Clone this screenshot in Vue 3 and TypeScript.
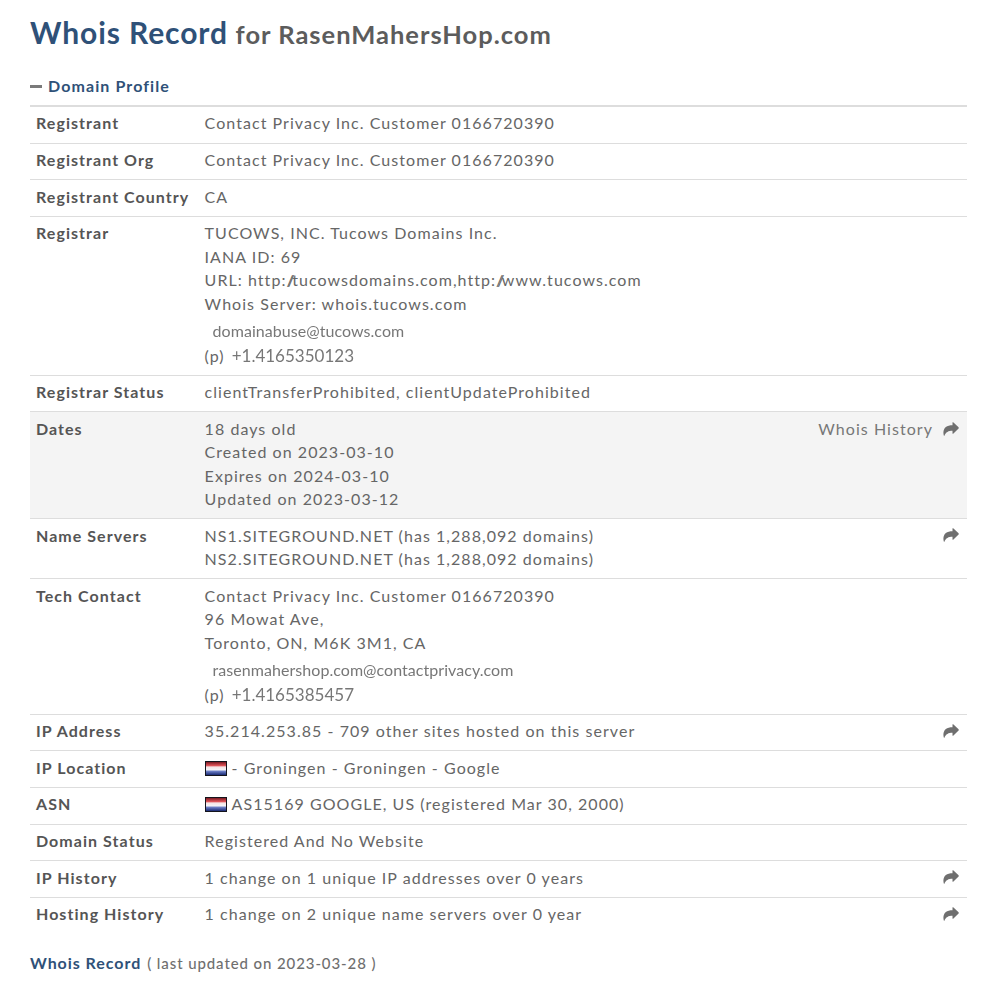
<script setup lang="ts">
interface Row {
  label: string
  lines: string[]
  shade?: boolean
  arrow?: boolean
  link?: string
  email?: string
  phone?: string
  flag?: boolean
}
const rows: Row[] = [
  { label: 'Registrant', lines: ['Contact Privacy Inc. Customer 0166720390'] },
  { label: 'Registrant Org', lines: ['Contact Privacy Inc. Customer 0166720390'] },
  { label: 'Registrant Country', lines: ['CA'] },
  {
    label: 'Registrar',
    lines: ['TUCOWS, INC. Tucows Domains Inc.', 'IANA ID: 69', 'URL: http://tucowsdomains.com,http://www.tucows.com', 'Whois Server: whois.tucows.com'],
    email: 'domainabuse@tucows.com',
    phone: '+1.4165350123'
  },
  { label: 'Registrar Status', lines: ['clientTransferProhibited, clientUpdateProhibited'] },
  {
    label: 'Dates',
    lines: ['18 days old', 'Created on 2023-03-10', 'Expires on 2024-03-10', 'Updated on 2023-03-12'],
    shade: true,
    arrow: true,
    link: 'Whois History'
  },
  { label: 'Name Servers', lines: ['NS1.SITEGROUND.NET (has 1,288,092 domains)', 'NS2.SITEGROUND.NET (has 1,288,092 domains)'], arrow: true },
  {
    label: 'Tech Contact',
    lines: ['Contact Privacy Inc. Customer 0166720390', '96 Mowat Ave,', 'Toronto, ON, M6K 3M1, CA'],
    email: 'rasenmahershop.com@contactprivacy.com',
    phone: '+1.4165385457'
  },
  { label: 'IP Address', lines: ['35.214.253.85 - 709 other sites hosted on this server'], arrow: true },
  { label: 'IP Location', lines: ['- Groningen - Groningen - Google'], flag: true },
  { label: 'ASN', lines: ['AS15169 GOOGLE, US (registered Mar 30, 2000)'], flag: true },
  { label: 'Domain Status', lines: ['Registered And No Website'] },
  { label: 'IP History', lines: ['1 change on 1 unique IP addresses over 0 years'], arrow: true },
  { label: 'Hosting History', lines: ['1 change on 2 unique name servers over 0 year'], arrow: true }
]
const parts = (line: string): string[] => line.split(/(\/\/)/)
</script>

<template>
  <main class="page">
    <h1 class="title"><span class="title-main">Whois Record</span> <span class="title-for">for RasenMahersHop.com</span></h1>
    <h2 class="section"><span class="minus"></span>Domain Profile</h2>
    <div class="table">
      <div v-for="row in rows" :key="row.label" class="row" :class="{ shade: row.shade }">
        <div class="label">{{ row.label }}</div>
        <div class="value">
          <div v-for="line in row.lines" :key="line" class="line">
            <svg v-if="row.flag" class="flag" viewBox="0 0 22 15" aria-hidden="true">
              <defs>
                <linearGradient id="nl" x1="0" y1="0" x2="0" y2="1">
                  <stop offset="0" stop-color="#7a1a22" />
                  <stop offset="0.28" stop-color="#e0555a" />
                  <stop offset="0.38" stop-color="#f6e4e4" />
                  <stop offset="0.6" stop-color="#f4f4f8" />
                  <stop offset="0.72" stop-color="#6a7cc4" />
                  <stop offset="1" stop-color="#1a2a72" />
                </linearGradient>
              </defs>
              <rect width="22" height="15" fill="#14141c" />
              <rect x="1" y="1" width="20" height="13" fill="url(#nl)" />
            </svg><span v-for="(part, i) in parts(line)" :key="i" :class="{ slashes: part === '//' }">{{ part }}</span>
          </div>
          <div v-if="row.email" class="email">{{ row.email }}</div>
          <div v-if="row.phone" class="phone-line"><span class="p">(p)</span><span class="phone">{{ row.phone }}</span></div>
        </div>
        <div v-if="row.arrow" class="side">
          <span v-if="row.link" class="link">{{ row.link }}</span>
          <svg class="arrow" viewBox="0 0 16 14" aria-hidden="true">
            <path d="M15.600 5.200 10.200.300c-.300-.300-.700-.100-.700.300v2.600C4 3.200.400 5.500.400 10.800c0 1 .200 2 .500 3 .100.200.400.200.500 0C2.800 10 5.400 8.700 9.500 8.700v2.700c0 .400.400.600.700.300l5.400-5.100c.300-.300.300-.700 0-1z" />
          </svg>
        </div>
      </div>
    </div>
    <p class="foot"><strong>Whois Record</strong> <span>( last updated on 2023-03-28 )</span></p>
  </main>
</template>

<style>
html, body { margin: 0; background: #fff; }
</style>

<style scoped>
.page {
  box-sizing: border-box;
  width: 991px;
  height: 981px;
  overflow: hidden;
  padding: 0 24px 0 30px;
  font-family: Lato, "Liberation Sans", sans-serif;
  color: #555;
}
.title {
  margin: 0;
  padding-top: 13px;
  height: 56px;
  box-sizing: border-box;
  line-height: 38px;
  font-weight: 700;
  letter-spacing: 0.9px;
}
.title-main { font-size: 30px; color: #2f5178; }
.title-for { font-size: 25.500px; letter-spacing: 1px; color: #5c5c5c; margin-left: -1px; }
.section {
  margin: 20px 0 0;
  height: 29px;
  line-height: 20px;
  font-size: 16px;
  font-weight: 700;
  letter-spacing: 1.1px;
  color: #2f5178;
  border-bottom: 2px solid #ddd;
  display: flex;
  align-items: flex-start;
}
.minus {
  width: 12px;
  height: 3px;
  margin: 9px 6px 0 0;
  background: #7a7a7a;
}
.row {
  display: flex;
  padding: 4.400px 6px 7.850px;
  border-bottom: 1px solid #ddd;
  line-height: 23.400px;
  font-size: 16px;
  letter-spacing: 1.05px;
}
.row:last-child { border-bottom: 0; }
.row.shade { background: #f4f4f4; }
.label {
  width: 168.600px;
  flex: none;
  font-weight: 700;
  color: #555;
}
.value { flex: 1; color: #666; white-space: nowrap; }
.slashes { letter-spacing: -2.600px; }
.flag {
  width: 22px;
  height: 15px;
  vertical-align: -2px;
  margin-right: 5px;
  filter: blur(0.4px);
}
.email {
  padding: 4px 0 0 8px;
  height: 24px;
  line-height: 24px;
  letter-spacing: 0.05px;
  color: #777;
  filter: blur(0.3px);
}
.phone-line { height: 24px; line-height: 26px; }
.phone { margin-left: 7px; letter-spacing: 0; color: #777; font-size: 17px; filter: blur(0.3px); display: inline-block; }
.side {
  display: flex;
  align-items: center;
  height: 23.400px;
  color: #777;
}
.link { margin-right: 10px; }
.arrow {
  width: 16px;
  height: 14px;
  margin-right: 2px;
  fill: #6f6f6f;
}
.foot {
  margin: 0;
  padding-top: 17px;
  line-height: 24px;
  font-size: 16px;
  letter-spacing: 0.95px;
  color: #777;
}
.foot strong { color: #2f5178; }
.foot span { margin-left: 1px; font-size: 15px; letter-spacing: 0.9px; font-weight: 500; color: #6f6f6f; }
</style>
